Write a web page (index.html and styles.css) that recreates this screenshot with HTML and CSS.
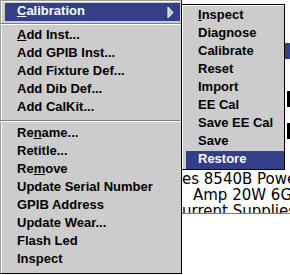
FILE: index.html
```html
<!DOCTYPE html>
<html>
<head>
    <title>Calibration menu</title>
    <link rel="stylesheet" href="styles.css">
</head>
<body>
    <div class="doc">
        <div class="doc-rows">
            <div class="doc-row"></div>
            <div class="doc-row"></div>
            <div class="doc-row selected"></div>
            <div class="doc-row"></div>
            <div class="doc-row"></div>
            <div class="doc-row dark"></div>
            <div class="doc-row"></div>
            <div class="doc-row dark"></div>
            <div class="doc-row"></div>
            <div class="doc-row"></div>
            <div class="doc-row">es 8540B Power</div>
            <div class="doc-row indent">Amp 20W 6GHz</div>
            <div class="doc-row">urrent Supplies</div>
        </div>
    </div>

    <div class="menu">
        <div class="item active">
            <span><u>C</u>alibration</span>
            <svg class="arrow" width="8" height="13" viewBox="0 0 8 13">
                <polygon points="1,1 6,6.5 1,12" fill="#c4c4c4" stroke="#fff" stroke-width="1"/>
            </svg>
        </div>
        <div class="sep first"></div>
        <div class="item"><span><u>A</u>dd Inst...</span></div>
        <div class="item"><span>Add GPIB Inst...</span></div>
        <div class="item"><span>Add Fixture Def...</span></div>
        <div class="item"><span>Add Dib Def...</span></div>
        <div class="item"><span>Add CalKit...</span></div>
        <div class="sep"></div>
        <div class="item"><span>Re<u>n</u>ame...</span></div>
        <div class="item"><span>Retitle...</span></div>
        <div class="item"><span>Re<u>m</u>ove</span></div>
        <div class="item"><span>Update Serial Number</span></div>
        <div class="item"><span>GPIB Address</span></div>
        <div class="item"><span>Update Wear...</span></div>
        <div class="item"><span>Flash Led</span></div>
        <div class="item"><span>Inspect</span></div>
    </div>

    <div class="submenu">
        <div class="item"><span><u>I</u>nspect</span></div>
        <div class="item"><span>Diagnose</span></div>
        <div class="item"><span>Calibrate</span></div>
        <div class="item"><span>Reset</span></div>
        <div class="item"><span>Import</span></div>
        <div class="item"><span>EE Cal</span></div>
        <div class="item"><span>Save EE Cal</span></div>
        <div class="item"><span>Save</span></div>
        <div class="item active"><span>Restore</span></div>
    </div>
</body>
</html>
```

FILE: styles.css
```css
body {
    margin: 0;
    width: 290px;
    height: 275px;
    overflow: hidden;
    position: relative;
    background-color: #fff;
    font-family: "Liberation Sans", Arial, sans-serif;
}

/* window content behind the menus */
.doc {
    margin-left: 182px;
    padding-top: 11px;
    height: 202px;
    border-bottom: 1px solid #808080;
    overflow: hidden;
}

.doc-row {
    height: 16px;
    line-height: 16px;
    font-family: "DejaVu Sans", sans-serif;
    font-size: 15px;
    color: #000;
    white-space: nowrap;
    overflow: hidden;
}

.doc-row.indent {
    padding-left: 11px;
}

.doc-row.selected {
    background-color: #334089;
}

.doc-row.dark {
    background: linear-gradient(to right, #fff 105px, #000 105px);
}

/* menus */
.menu,
.submenu {
    position: absolute;
    background-color: #cccccc;
    font-size: 13px;
    font-weight: bold;
    color: #000;
}

.menu {
    left: 0;
    top: 0;
    width: 175px;
    height: 270px;
    padding: 2px 1px 0 4px;
    border-left: 1px solid #999;
    border-top: 1px solid #999;
    border-right: 1px solid #000;
    border-bottom: 1px solid #000;
    box-shadow: inset 1px 1px 0 #fff;
}

.submenu {
    left: 181px;
    top: 4px;
    width: 98px;
    padding: 2px 0 0 4px;
    border: 1px solid #000;
    box-shadow: inset 1px 1px 0 #fff;
}

.item {
    height: 18px;
    line-height: 16px;
    padding-left: 12px;
    display: flex;
    align-items: flex-start;
    justify-content: space-between;
    white-space: nowrap;
}

.item.active {
    background-color: #334089;
    color: #fff;
}

.arrow {
    margin-top: 3px;
    margin-right: 5px;
}

.sep {
    height: 8px;
    margin-left: -5px;
    margin-right: -1px;
    position: relative;
}

.sep.first {
    height: 6px;
}

.sep::after {
    content: "";
    position: absolute;
    left: 0;
    right: 0;
    top: 3px;
    height: 1px;
    background-color: #808080;
    border-bottom: 1px solid #fff;
}

.sep.first::after {
    top: 2px;
}
```
